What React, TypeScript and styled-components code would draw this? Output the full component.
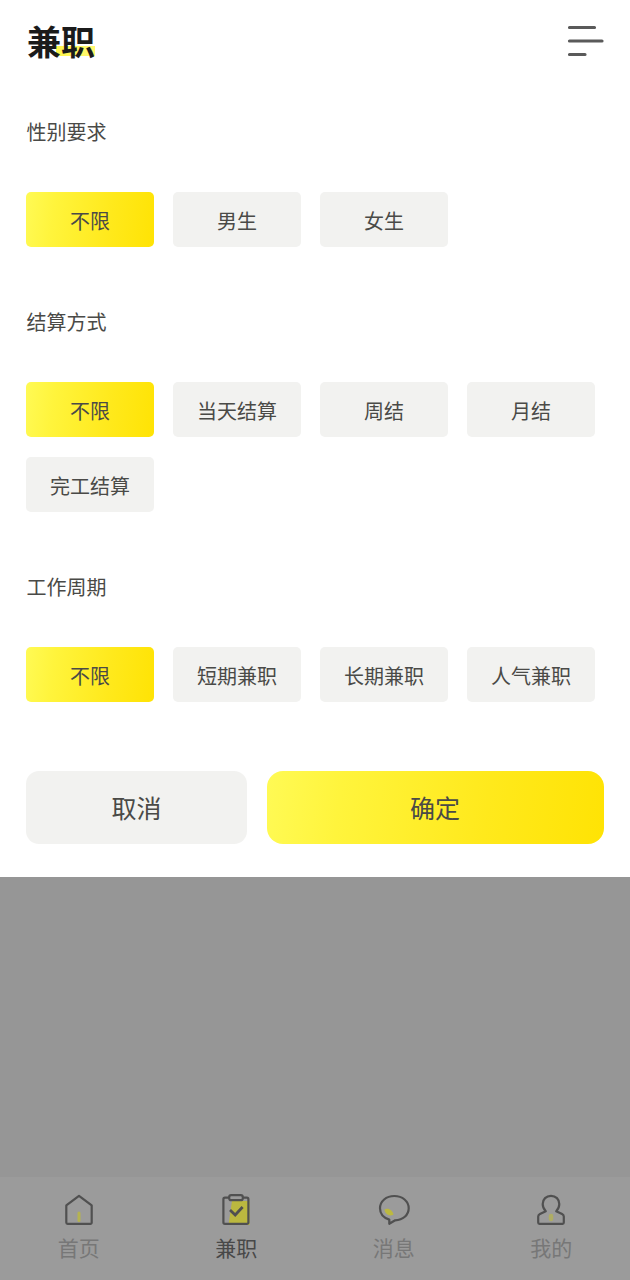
import React, { useState } from "react";
import styled, { createGlobalStyle, css } from "styled-components";

const GlobalStyle = createGlobalStyle`
  *, *::before, *::after { box-sizing: border-box; }
  body {
    margin: 0;
    font-family: "Noto Sans CJK SC", "Noto Sans", sans-serif;
    color: #4a4a47;
  }
  button { font: inherit; color: inherit; border: 0; padding: 0; cursor: pointer; }
`;

const yellow = "linear-gradient(97deg, #fffa55 0%, #fff43c 22%, #ffe91c 65%, #ffe304 100%)";

const Screen = styled.div`
  display: flex;
  flex-direction: column;
  width: 630px;
  height: 1280px;
  background: #969696;
  overflow: hidden;
`;

const Sheet = styled.main`
  height: 877px;
  flex: none;
  padding: 0 26px;
  background: #fff;
`;

const Header = styled.header`
  display: flex;
  justify-content: space-between;
  align-items: center;
  height: 82px;
  margin-bottom: 35px;
`;

const Title = styled.h1`
  margin: 0 0 0 1px;
  font-size: 34px;
  line-height: 48px;
  font-weight: 700;
  color: #1b1b1b;
  background: linear-gradient(100deg, #fff64c, #fff973) 29px 29px / 40px 10px no-repeat;
`;

const MenuButton = styled.button`
  display: flex;
  width: 37px;
  height: 34px;
  background: none;
`;

const Section = styled.section<{ $gap: number }>`
  margin-bottom: ${(p) => p.$gap}px;
`;

const SectionTitle = styled.h2`
  margin: 0 0 45px;
  height: 30px;
  padding-left: 0.5px;
  font-size: 20px;
  line-height: 30px;
  font-weight: 400;
`;

const Chips = styled.div`
  display: grid;
  grid-template-columns: repeat(4, 128px);
  grid-auto-rows: 55px;
  gap: 20px 19px;
`;

const Chip = styled.button<{ $active: boolean }>`
  padding-top: 2px;
  border-radius: 5px;
  background: ${(p) => (p.$active ? yellow : "#f2f2f0")};
  font-size: 20px;
  line-height: 53px;
`;

const Actions = styled.div`
  display: grid;
  grid-template-columns: 221px 337px;
  gap: 20px;
`;

const ActionButton = styled.button<{ $primary?: boolean }>`
  height: 73px;
  border-radius: 13px;
  background: #f2f2f0;
  font-size: 25px;
  line-height: 73px;
  ${(p) => p.$primary && css`
    padding-right: 1px;
    background: ${yellow};
    border-radius: 16px;
  `}
`;

const TabBar = styled.nav`
  display: grid;
  grid-template-columns: repeat(4, 1fr);
  height: 103px;
  margin-top: auto;
  background: #9b9b9b;
`;

const Tab = styled.a<{ $active?: boolean }>`
  display: flex;
  flex-direction: column;
  align-items: center;
  padding-top: 15px;
  font-size: 21px;
  line-height: 30px;
  color: ${(p) => (p.$active ? "#484848" : "#777")};
`;

const TabIcon = styled.svg`
  width: 36px;
  height: 36px;
  margin-bottom: 4px;
  fill: none;
  stroke: #505050;
  stroke-width: 2.2;
  stroke-linejoin: round;
  stroke-linecap: round;
`;

const groups = [
  { title: "性别要求", options: ["不限", "男生", "女生"], gap: 60 },
  { title: "结算方式", options: ["不限", "当天结算", "周结", "月结", "完工结算"], gap: 60 },
  { title: "工作周期", options: ["不限", "短期兼职", "长期兼职", "人气兼职"], gap: 69 },
];

const HomeIcon = () => (
  <TabIcon viewBox="0 0 36 36">
    <path d="M18 21v7.500" stroke="#bcb93f" strokeWidth="3" opacity=".8" />
    <path d="M5.300 13.400 18 3.800l12.700 9.600v17.100a1.300 1.300 0 0 1-1.300 1.300H6.600a1.300 1.300 0 0 1-1.300-1.300z" />
  </TabIcon>
);

const JobsIcon = () => (
  <TabIcon viewBox="0 0 36 36">
    <path d="M14 9h17.500v24H10.500z" fill="#bbb83f" stroke="none" />
    <path d="M11 5.700H6.900a1.500 1.500 0 0 0-1.500 1.500v23a1.600 1.600 0 0 0 1.600 1.600h21.800a1.600 1.600 0 0 0 1.600-1.600v-23a1.500 1.500 0 0 0-1.500-1.500H25" />
    <rect x="11.200" y="3.200" width="13.600" height="5" rx="2" fill="#9b9b9b" />
    <path d="m12 18 5.200 5 7.400-8" strokeWidth="2.800" strokeLinecap="butt" strokeLinejoin="miter" />
  </TabIcon>
);

const MessageIcon = () => (
  <TabIcon viewBox="0 0 36 36">
    <path d="M8.500 17.500c3.500-2.200 8 .5 9 5-3.500 2.500-8.500 0-9-5z" fill="#bcb93f" stroke="none" />
    <path d="M13.300 31.800V27.600C7.500 25.800 4 21.500 4 16.300 4 9.200 10.200 4 18.300 4S32.700 9.200 32.700 16.200c0 6.900-5.800 11.800-13.500 12.100z" />
  </TabIcon>
);

const ProfileIcon = () => (
  <TabIcon viewBox="0 0 36 36">
    <path d="M18 24v3" stroke="#bcb93f" strokeWidth="4.500" opacity=".6" />
    <path d="M12.800 19.200C10.800 17.300 9.700 14.700 9.700 12c0-4.800 3.500-8.200 8.300-8.200s8.300 3.400 8.300 8.200c0 2.700-1.100 5.300-3.100 7.200l5.900 2.900c1 .5 1.700 1.300 1.700 2.400v6.100c0 .7-.5 1.200-1.200 1.200H6.400c-.7 0-1.200-.5-1.200-1.200v-6.100c0-1.100.7-1.900 1.700-2.400z" />
  </TabIcon>
);

const tabs = [
  { label: "首页", Icon: HomeIcon },
  { label: "兼职", Icon: JobsIcon },
  { label: "消息", Icon: MessageIcon },
  { label: "我的", Icon: ProfileIcon },
];

export default function App() {
  const [selected, setSelected] = useState([0, 0, 0]);

  return (
    <Screen>
      <GlobalStyle />
      <Sheet>
        <Header>
          <Title>兼职</Title>
          <MenuButton aria-label="筛选">
            <svg width="37" height="34" viewBox="0 0 37 34" stroke="#5a5a5a" strokeWidth="3.200" strokeLinecap="round">
              <path d="M2.500 3.500h25M2.500 17h32.500M2.500 30.500h15.500" />
            </svg>
          </MenuButton>
        </Header>
        {groups.map((group, g) => (
          <Section key={group.title} $gap={group.gap}>
            <SectionTitle>{group.title}</SectionTitle>
            <Chips>
              {group.options.map((option, i) => (
                <Chip
                  key={option}
                  $active={selected[g] === i}
                  onClick={() => setSelected(selected.map((s, n) => (n === g ? i : s)))}
                >
                  {option}
                </Chip>
              ))}
            </Chips>
          </Section>
        ))}
        <Actions>
          <ActionButton>取消</ActionButton>
          <ActionButton $primary>确定</ActionButton>
        </Actions>
      </Sheet>
      <TabBar>
        {tabs.map(({ label, Icon }, i) => (
          <Tab key={label} $active={i === 1}>
            <Icon />
            {label}
          </Tab>
        ))}
      </TabBar>
    </Screen>
  );
}
